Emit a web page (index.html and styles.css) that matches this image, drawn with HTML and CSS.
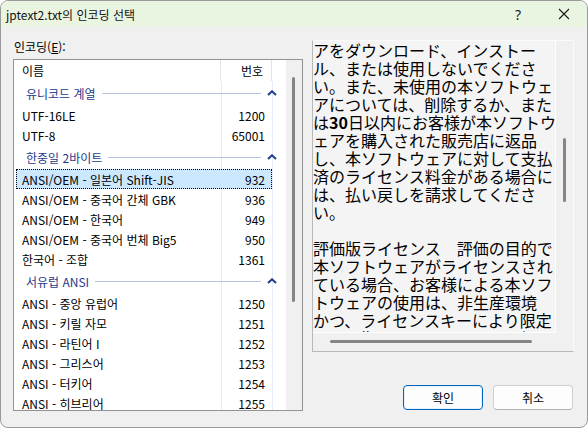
FILE: index.html
```html
<!DOCTYPE html>
<html lang="ko">
<head>
    <meta charset="UTF-8">
    <title>인코딩 선택</title>
<link rel="stylesheet" href="styles.css">
</head>
<body>
    <div class="window">
        <div class="titlebar">
            <span class="title">jptext2.txt의 인코딩 선택</span>
            <span class="caption-btn help">?</span>
            <span class="caption-btn close">
                <svg width="12" height="12" viewBox="0 0 12 12"><path d="M1 1 L11 11 M11 1 L1 11" stroke="#1a1a1a" stroke-width="1.1" fill="none"/></svg>
            </span>
        </div>

        <div class="content">
            <div class="left">
                <div class="field-label">인코딩(<u>E</u>):</div>
                <div class="listbox">
                    <div class="list">
                        <div class="list-head">
                            <span class="col-name">이름</span>
                            <span class="col-num">번호</span>
                        </div>

                        <div class="group">
                            <span class="group-name">유니코드 계열</span>
                            <span class="group-line"></span>
                            <svg class="chevron" width="10" height="6" viewBox="0 0 10 6"><polyline points="1,5 5,1.3 9,5" stroke="#1f3b8e" stroke-width="2" fill="none"/></svg>
                        </div>
                        <div class="row"><span class="col-name">UTF-16LE</span><span class="col-num">1200</span></div>
                        <div class="row"><span class="col-name">UTF-8</span><span class="col-num">65001</span></div>

                        <div class="group">
                            <span class="group-name">한중일 2바이트</span>
                            <span class="group-line"></span>
                            <svg class="chevron" width="10" height="6" viewBox="0 0 10 6"><polyline points="1,5 5,1.3 9,5" stroke="#1f3b8e" stroke-width="2" fill="none"/></svg>
                        </div>
                        <div class="row selected"><span class="col-name">ANSI/OEM - 일본어 Shift-JIS</span><span class="col-num">932</span></div>
                        <div class="row"><span class="col-name">ANSI/OEM - 중국어 간체 GBK</span><span class="col-num">936</span></div>
                        <div class="row"><span class="col-name">ANSI/OEM - 한국어</span><span class="col-num">949</span></div>
                        <div class="row"><span class="col-name">ANSI/OEM - 중국어 번체 Big5</span><span class="col-num">950</span></div>
                        <div class="row"><span class="col-name">한국어 - 조합</span><span class="col-num">1361</span></div>

                        <div class="group">
                            <span class="group-name">서유럽 ANSI</span>
                            <span class="group-line"></span>
                            <svg class="chevron" width="10" height="6" viewBox="0 0 10 6"><polyline points="1,5 5,1.3 9,5" stroke="#1f3b8e" stroke-width="2" fill="none"/></svg>
                        </div>
                        <div class="row"><span class="col-name">ANSI - 중앙 유럽어</span><span class="col-num">1250</span></div>
                        <div class="row"><span class="col-name">ANSI - 키릴 자모</span><span class="col-num">1251</span></div>
                        <div class="row"><span class="col-name">ANSI - 라틴어 I</span><span class="col-num">1252</span></div>
                        <div class="row"><span class="col-name">ANSI - 그리스어</span><span class="col-num">1253</span></div>
                        <div class="row"><span class="col-name">ANSI - 터키어</span><span class="col-num">1254</span></div>
                        <div class="row"><span class="col-name">ANSI - 히브리어</span><span class="col-num">1255</span></div>
                    </div>
                    <div class="vscroll"><div class="vscroll-thumb"></div></div>
                </div>
            </div>

            <div class="right">
                <div class="textbox">
                    <div class="viewport">
                        <div>アをダウンロード、インストー</div>
                        <div>ル、または使用しないでくださ</div>
                        <div>い。また、未使用の本ソフトウェ</div>
                        <div>アについては、削除するか、また</div>
                        <div>は<b>30</b>日以内にお客様が本ソフトウ</div>
                        <div>ェアを購入された販売店に返品</div>
                        <div>し、本ソフトウェアに対して支払</div>
                        <div>済のライセンス料金がある場合に</div>
                        <div>は、払い戻しを請求してくださ</div>
                        <div>い。</div>
                        <div>&nbsp;</div>
                        <div>評価版ライセンス　評価の目的で</div>
                        <div>本ソフトウェアがライセンスされ</div>
                        <div>ている場合、お客様による本ソフ</div>
                        <div>トウェアの使用は、非生産環境</div>
                        <div>かつ、ライセンスキーにより限定</div>
                        <div>された期間に限られます。評価</div>
                    </div>
                    <div class="tb-vbar"><div class="tb-vthumb"></div></div>
                    <div class="tb-hbar"><div class="tb-hthumb"></div></div>
                    <div class="tb-corner"></div>
                </div>
                <div class="buttons">
                    <button class="btn primary">확인</button>
                    <button class="btn">취소</button>
                </div>
            </div>
        </div>
    </div>
</body>
</html>
```

FILE: styles.css
```css
* {
    box-sizing: border-box;
}

html, body {
    margin: 0;
}

body {
    width: 588px;
    height: 428px;
    overflow: hidden;
    background: #ffffff;
    font-family: "Noto Sans CJK KR", "Noto Sans", sans-serif;
    font-size: 12px;
    color: #000;
}

.window {
    width: 588px;
    height: 428px;
    border: 1px solid #9a9a9a;
    border-radius: 8px;
    background: #f0f0f0;
    overflow: hidden;
    display: flex;
    flex-direction: column;
}

/* title bar */
.titlebar {
    height: 26px;
    flex-shrink: 0;
    background: #eaf5e1;
    display: flex;
    align-items: center;
    padding-left: 5px;
}

.title {
    font-size: 12px;
    color: #111;
}

.caption-btn {
    width: 46px;
    height: 26px;
    display: flex;
    align-items: center;
    justify-content: center;
}

.help {
    margin-left: auto;
    font-family: "Noto Sans", sans-serif;
    font-size: 14px;
    color: #222;
}

/* main area */
.content {
    flex: 1;
    display: flex;
    gap: 9px;
    padding: 13px 13px 0 12px;
}

.left {
    width: 290px;
    display: flex;
    flex-direction: column;
}

.field-label {
    height: 19px;
    line-height: 14px;
    padding-left: 1px;
}

.listbox {
    height: 352px;
    border: 1px solid #939393;
    background: #fff;
    display: flex;
    overflow: hidden;
}

.list {
    flex: 1;
    padding-left: 2px;
    background:
        linear-gradient(#e4edf8, #e4edf8) no-repeat 207px 21px / 1px 100%,
        linear-gradient(#e4edf8, #e4edf8) no-repeat 258px 21px / 1px 100%;
}

.list-head {
    height: 21px;
    width: 256px;
    display: grid;
    grid-template-columns: 205px 51px;
    align-items: stretch;
}

.list-head span {
    display: flex;
    align-items: center;
    border-right: 1px solid #e3e3e3;
}

.list-head .col-name {
    padding-left: 6px;
}

.list-head .col-num {
    justify-content: flex-end;
    padding-right: 8px;
}

.group {
    height: 24px;
    display: flex;
    align-items: center;
    padding: 0 7px 0 10px;
}

.group-name {
    color: #1e3a8c;
}

.group-line {
    flex: 1;
    height: 1px;
    background: #b7c4df;
    margin: 0 6px;
}

.chevron {
    display: block;
    margin-right: 2px;
}

.row {
    height: 20px;
    width: 256px;
    display: grid;
    grid-template-columns: 205px 51px;
    align-items: center;
    border: 1px solid transparent;
}

.row .col-name {
    padding-left: 5px;
    white-space: nowrap;
}

.row .col-num {
    text-align: right;
    padding-right: 8px;
}

.row.selected {
    background: #cce8ff;
    border: 1px dotted #000;
}

.vscroll {
    width: 16px;
    background: #f0f0f0;
    padding: 17px 0 0 6px;
}

.vscroll-thumb {
    width: 3px;
    height: 225px;
    background: #858585;
    border-radius: 2px;
}

/* right side text */
.right {
    flex: 1;
    display: flex;
    flex-direction: column;
}

.textbox {
    height: 312px;
    border: 1px solid;
    border-color: #fbfbfb #fbfbfb #b9b9b9 #b9b9b9;
    display: grid;
    grid-template-columns: 243px 17px;
    grid-template-rows: 292px 18px;
    background: #f0f0f0;
}

.viewport {
    background: #f4f4f4;
    border-right: 1px solid #fff;
    border-bottom: 1px solid #fff;
    overflow: hidden;
    font-family: "Noto Sans CJK JP", sans-serif;
    font-size: 16px;
    line-height: 18px;
    white-space: nowrap;
    color: #000;
}

.tb-vbar {
    padding: 97px 0 0 7px;
}

.tb-vthumb {
    width: 3px;
    height: 64px;
    background: #858585;
    border-radius: 2px;
}

.tb-hbar {
    padding: 7px 0 0 17px;
}

.tb-hthumb {
    width: 202px;
    height: 3px;
    background: #858585;
    border-radius: 2px;
}

.buttons {
    margin-top: 33px;
    display: flex;
    justify-content: flex-end;
    gap: 10px;
    padding-right: 1px;
}

.btn {
    width: 80px;
    height: 25px;
    border: 1px solid #d0d0d0;
    border-bottom-color: #b4b4b4;
    border-radius: 4px;
    background: #fdfdfd;
    font-family: "Noto Sans CJK KR", sans-serif;
    font-size: 12px;
    color: #000;
    padding: 0;
}

.btn.primary {
    border: 1px solid #0067c0;
    box-shadow: inset 0 0 0 1px #e6f0fa;
}
```
